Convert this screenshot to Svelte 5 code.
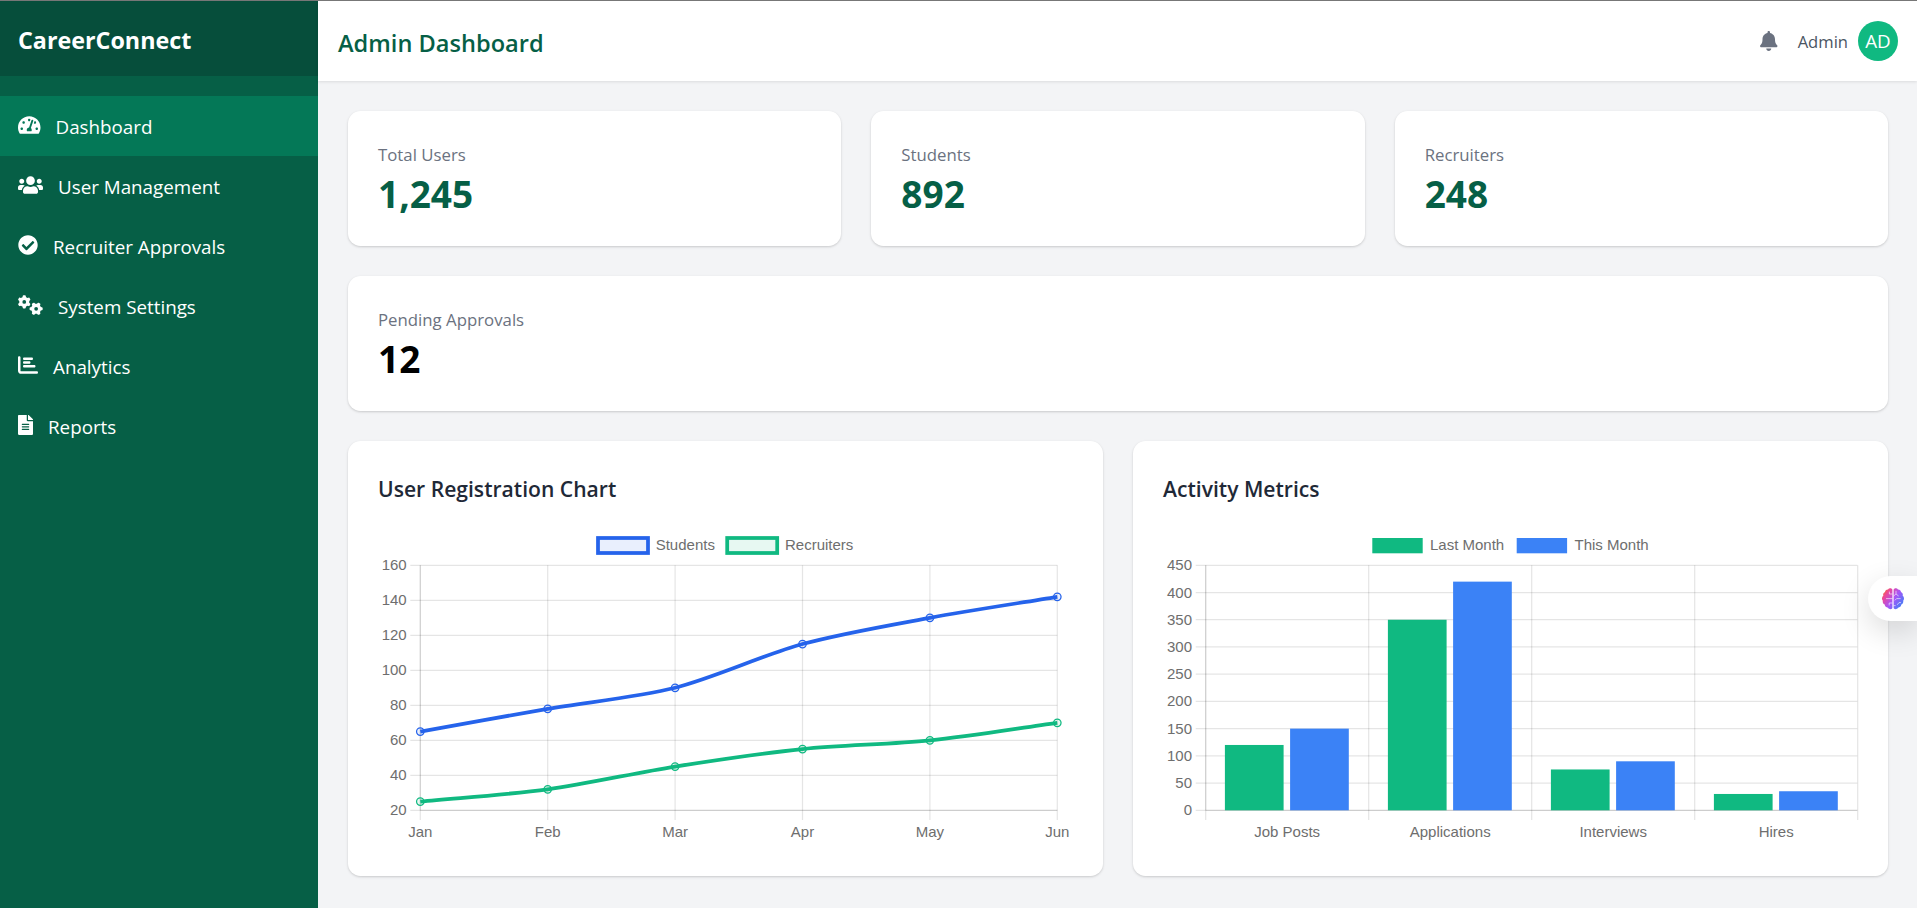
<script>
  const nav = [
    { label: 'Dashboard', vb: '0 0 576 512', w: 22.5, active: true, d: 'M288 32C128.94 32 0 160.94 0 320c0 52.8 14.25 102.26 39.06 144.8 5.61 9.62 16.3 15.2 27.44 15.2h443c11.14 0 21.83-5.58 27.44-15.2C561.75 422.26 576 372.8 576 320c0-159.06-128.94-288-288-288zm0 64c14.71 0 26.58 10.13 30.32 23.65-1.11 2.26-2.64 4.23-3.45 6.67l-9.22 27.67c-5.13 3.49-10.97 6.01-17.64 6.01-17.67 0-32-14.33-32-32S270.33 96 288 96zM96 384c-17.67 0-32-14.33-32-32s14.33-32 32-32 32 14.33 32 32-14.33 32-32 32zm48-160c-17.67 0-32-14.33-32-32s14.33-32 32-32 32 14.33 32 32-14.33 32-32 32zm246.77-72.41l-61.33 184C343.13 347.33 352 364.54 352 384c0 11.72-3.38 22.55-8.88 32H232.88c-5.5-9.45-8.88-20.28-8.88-32 0-33.94 26.5-61.43 59.9-63.59l61.34-184.01c4.17-12.56 17.73-19.45 30.36-15.17 12.57 4.19 19.35 17.79 15.17 30.36zm14.66 57.2l15.52-46.55c3.47-1.29 7.13-2.23 11.05-2.23 17.67 0 32 14.33 32 32s-14.33 32-32 32c-11.38-.01-20.89-6.28-26.57-15.22zM480 384c-17.67 0-32-14.33-32-32s14.33-32 32-32 32 14.33 32 32-14.33 32-32 32z' },
    { label: 'User Management', vb: '0 0 640 512', w: 25, d: 'M96 224c35.3 0 64-28.7 64-64s-28.7-64-64-64-64 28.7-64 64 28.7 64 64 64zm448 0c35.3 0 64-28.7 64-64s-28.7-64-64-64-64 28.7-64 64 28.7 64 64 64zm32 32h-64c-17.6 0-33.5 7.1-45.1 18.6 40.3 22.1 68.9 62 75.1 109.4h66c17.7 0 32-14.3 32-32v-32c0-35.3-28.7-64-64-64zm-256 0c61.9 0 112-50.1 112-112S381.9 32 320 32 208 82.1 208 144s50.1 112 112 112zm76.8 32h-8.3c-20.8 10-43.9 16-68.5 16s-47.6-6-68.5-16h-8.3C179.6 288 128 339.6 128 403.2V432c0 26.5 21.5 48 48 48h288c26.5 0 48-21.5 48-48v-28.8c0-63.6-51.6-115.2-115.2-115.2zm-223.7-13.4C161.5 263.1 145.6 256 128 256H64c-35.3 0-64 28.7-64 64v32c0 17.7 14.3 32 32 32h65.9c6.3-47.4 34.9-87.3 75.2-109.4z' },
    { label: 'Recruiter Approvals', vb: '0 0 512 512', w: 20, d: 'M504 256c0 136.967-111.033 248-248 248S8 392.967 8 256 119.033 8 256 8s248 111.033 248 248zM227.314 387.314l184-184c6.248-6.248 6.248-16.379 0-22.627l-22.627-22.627c-6.248-6.249-16.379-6.249-22.628 0L216 308.118l-70.059-70.059c-6.248-6.248-16.379-6.248-22.628 0l-22.627 22.627c-6.248 6.248-6.248 16.379 0 22.627l104 104c6.249 6.249 16.379 6.249 22.628.001z' },
    { label: 'System Settings', vb: '0 0 640 512', w: 25, d: 'M308.5 135.3c7.1-6.3 9.9-16.2 6.2-25c-2.3-5.3-4.8-10.5-7.6-15.5L304 89.4c-3-5-6.3-9.9-9.8-14.6c-5.7-7.6-15.7-10.1-24.7-7.1l-28.2 9.3c-10.7-8.8-23-16-36.2-20.9L199 27.1c-1.9-9.3-9.1-16.7-18.5-17.8C173.9 8.4 167.2 8 160.4 8h-.7c-6.8 0-13.5 .4-20.1 1.2c-9.4 1.1-16.6 8.6-18.5 17.8L115 56.1c-13.3 5-25.5 12.1-36.2 20.9L50.5 67.8c-9-3-19-.5-24.7 7.1c-3.5 4.7-6.8 9.6-9.9 14.6l-3 5.3c-2.8 5-5.3 10.2-7.6 15.6c-3.7 8.7-.9 18.6 6.2 25l22.2 19.8C32.6 161.9 32 168.9 32 176s.6 14.1 1.7 20.9L11.5 216.7c-7.1 6.3-9.9 16.2-6.2 25c2.3 5.3 4.8 10.5 7.6 15.6l3 5.2c3 5.1 6.3 9.9 9.9 14.6c5.7 7.6 15.7 10.1 24.7 7.1l28.2-9.3c10.7 8.8 23 16 36.2 20.9l6.1 29.1c1.9 9.3 9.1 16.7 18.5 17.8c6.7 .8 13.5 1.2 20.4 1.2s13.7-.4 20.4-1.2c9.4-1.1 16.6-8.6 18.5-17.8l6.1-29.1c13.3-5 25.5-12.1 36.2-20.9l28.2 9.3c9 3 19 .5 24.7-7.1c3.5-4.7 6.8-9.5 9.8-14.6l3.1-5.4c2.8-5 5.3-10.2 7.6-15.5c3.7-8.7 .9-18.6-6.2-25l-22.2-19.8c1.1-6.8 1.7-13.8 1.7-20.9s-.6-14.1-1.7-20.9l22.2-19.8zM208 176a48 48 0 1 1 -96 0 48 48 0 1 1 96 0zM504.7 500.5c6.3 7.1 16.2 9.9 25 6.2c5.3-2.3 10.5-4.8 15.5-7.6l5.4-3.1c5-3 9.9-6.3 14.6-9.8c7.6-5.7 10.1-15.7 7.1-24.7l-9.3-28.2c8.8-10.7 16-23 20.9-36.2l29.1-6.1c9.3-1.9 16.7-9.1 17.8-18.5c.8-6.7 1.2-13.5 1.2-20.4s-.4-13.7-1.2-20.4c-1.1-9.4-8.6-16.6-17.8-18.5L583.9 307c-5-13.3-12.1-25.5-20.9-36.2l9.3-28.2c3-9 .5-19-7.1-24.7c-4.7-3.5-9.6-6.8-14.6-9.9l-5.3-3c-5-2.8-10.2-5.3-15.6-7.6c-8.7-3.7-18.6-.9-25 6.2l-19.8 22.2c-6.8-1.1-13.8-1.7-20.9-1.7s-14.1 .6-20.9 1.7l-19.8-22.2c-6.3-7.1-16.2-9.9-25-6.2c-5.3 2.3-10.5 4.8-15.6 7.6l-5.2 3c-5.1 3-9.9 6.3-14.6 9.9c-7.6 5.7-10.1 15.7-7.1 24.7l9.3 28.2c-8.8 10.7-16 23-20.9 36.2L315.1 313c-9.3 1.9-16.7 9.1-17.8 18.5c-.8 6.7-1.2 13.5-1.2 20.4s.4 13.7 1.2 20.4c1.1 9.4 8.6 16.6 17.8 18.5l29.1 6.1c5 13.3 12.1 25.5 20.9 36.2l-9.3 28.2c-3 9-.5 19 7.1 24.7c4.7 3.5 9.5 6.8 14.6 9.8l5.4 3.1c5 2.8 10.2 5.3 15.5 7.6c8.7 3.7 18.6 .9 25-6.2l19.8-22.2c6.8 1.1 13.8 1.7 20.9 1.7s14.1-.6 20.9-1.7l19.8 22.2zM464 304a48 48 0 1 1 0 96 48 48 0 1 1 0-96z' },
    { label: 'Analytics', vb: '0 0 512 512', w: 20, d: 'M32 32c17.7 0 32 14.3 32 32V400c0 8.8 7.2 16 16 16H480c17.7 0 32 14.3 32 32s-14.3 32-32 32H80c-44.2 0-80-35.8-80-80V64C0 46.3 14.3 32 32 32zm96 64c0-17.7 14.3-32 32-32l192 0c17.7 0 32 14.3 32 32s-14.3 32-32 32l-192 0c-17.7 0-32-14.3-32-32zm32 64l128 0c17.7 0 32 14.3 32 32s-14.3 32-32 32l-128 0c-17.7 0-32-14.3-32-32s14.3-32 32-32zm0 96H416c17.7 0 32 14.3 32 32s-14.3 32-32 32H160c-17.7 0-32-14.3-32-32s14.3-32 32-32z' },
    { label: 'Reports', vb: '0 0 384 512', w: 15, d: 'M224 136V0H24C10.7 0 0 10.7 0 24v464c0 13.3 10.7 24 24 24h336c13.3 0 24-10.7 24-24V160H248c-13.2 0-24-10.8-24-24zm64 236c0 6.6-5.4 12-12 12H108c-6.6 0-12-5.4-12-12v-8c0-6.6 5.4-12 12-12h168c6.6 0 12 5.4 12 12v8zm0-64c0 6.6-5.4 12-12 12H108c-6.6 0-12-5.4-12-12v-8c0-6.6 5.4-12 12-12h168c6.6 0 12 5.4 12 12v8zm0-72v8c0 6.6-5.4 12-12 12H108c-6.6 0-12-5.4-12-12v-8c0-6.6 5.4-12 12-12h168c6.6 0 12 5.4 12 12zm96-114.1v6.1H256V0h6.1c6.4 0 12.5 2.5 17 7l97.9 98c4.5 4.5 7 10.6 7 16.9z' }
  ];

  const stats = [
    { label: 'Total Users', value: '1,245' },
    { label: 'Students', value: '892' },
    { label: 'Recruiters', value: '248' }
  ];

  const top = 565.3, bottom = 810.3;

  // line chart
  const lx0 = 420.3, lStep = 127.4;
  const months = ['Jan', 'Feb', 'Mar', 'Apr', 'May', 'Jun'];
  const lTicks = [160, 140, 120, 100, 80, 60, 40, 20];
  const ly = (v) => bottom - ((v - 20) * (bottom - top)) / 140;
  const lineSeries = [
    { label: 'Students', color: '#2563eb', fill: 'rgba(37,99,235,0.1)', data: [65, 78, 90, 115, 130, 142] },
    { label: 'Recruiters', color: '#10b981', fill: 'rgba(16,185,129,0.1)', data: [25, 32, 45, 55, 60, 70] }
  ].map((s) => {
    const pts = s.data.map((v, i) => [lx0 + i * lStep, ly(v)]);
    return { ...s, pts, path: spline(pts, 0.3) };
  });

  function spline(pts, t) {
    const cps = pts.map((p, i) => {
      const a = pts[i - 1] || p;
      const b = pts[i + 1] || p;
      const d1 = Math.hypot(p[0] - a[0], p[1] - a[1]);
      const d2 = Math.hypot(b[0] - p[0], b[1] - p[1]);
      const s1 = d1 / (d1 + d2);
      const s2 = d2 / (d1 + d2);
      return {
        prev: [p[0] - t * s1 * (b[0] - a[0]), p[1] - t * s1 * (b[1] - a[1])],
        next: [p[0] + t * s2 * (b[0] - a[0]), p[1] + t * s2 * (b[1] - a[1])]
      };
    });
    let d = `M${pts[0][0]} ${pts[0][1]}`;
    for (let i = 1; i < pts.length; i++) {
      const c1 = cps[i - 1].next, c2 = cps[i].prev;
      d += `C${c1[0]} ${c1[1]} ${c2[0]} ${c2[1]} ${pts[i][0]} ${pts[i][1]}`;
    }
    return d;
  }

  // bar chart
  const bx0 = 1205.7, bStep = 163;
  const bTicks = [450, 400, 350, 300, 250, 200, 150, 100, 50, 0];
  const by = (v) => bottom - (v * (bottom - top)) / 450;
  const cats = ['Job Posts', 'Applications', 'Interviews', 'Hires'];
  const barSeries = [
    { color: '#10b981', off: 19.2, data: [120, 350, 75, 30] },
    { color: '#3b82f6', off: 84.4, data: [150, 420, 90, 35] }
  ];
</script>

<div class="app">
  <aside class="sidebar">
    <div class="brand">CareerConnect</div>
    <nav class="nav">
      {#each nav as item}
        <div class="nav-item" class:active={item.active}>
          <svg class="nav-icon" viewBox={item.vb} width={item.w} height="20"><path d={item.d} fill="currentColor" /></svg>
          <span class="nav-text">{item.label}</span>
        </div>
      {/each}
    </nav>
  </aside>

  <div class="main">
    <header class="topbar">
      <h1>Admin Dashboard</h1>
      <div class="user">
        <svg class="bell" viewBox="0 0 448 512" width="17.5" height="20"><path fill="currentColor" d="M224 512c35.32 0 63.97-28.65 63.97-64H160.03c0 35.35 28.65 64 63.97 64zm215.39-149.71c-19.32-20.76-55.47-51.99-55.47-154.29 0-77.7-54.48-139.9-127.94-155.16V32c0-17.67-14.32-32-31.98-32s-31.98 14.33-31.98 32v20.84C118.56 68.1 64.08 130.3 64.08 208c0 102.3-36.15 133.53-55.47 154.29-6 6.45-8.66 14.16-8.61 21.71.11 16.4 12.98 32 32.1 32h383.8c19.12 0 32-15.6 32.1-32 .05-7.55-2.61-15.27-8.61-21.71z" /></svg>
        <span class="uname">Admin</span>
        <div class="avatar">AD</div>
      </div>
    </header>

    <main class="content">
      <section class="stats">
        {#each stats as s}
          <div class="card stat">
            <div class="stat-label">{s.label}</div>
            <div class="stat-value">{s.value}</div>
          </div>
        {/each}
        <div class="card stat wide">
          <div class="stat-label">Pending Approvals</div>
          <div class="stat-value black">12</div>
        </div>
      </section>

      <section class="charts">
        <div class="card chart">
          <h2>User Registration Chart</h2>
          <svg class="plot" viewBox="378 530 695 316" width="695" height="316">
            <rect x="598" y="538" width="50" height="15" fill="rgba(37,99,235,0.1)" stroke="#2563eb" stroke-width="3.75" />
            <text x="655.7" y="550" class="lbl">Students</text>
            <rect x="727.2" y="538" width="50" height="15" fill="rgba(16,185,129,0.1)" stroke="#10b981" stroke-width="3.75" />
            <text x="785" y="550" class="lbl">Recruiters</text>

            {#each lTicks as t}
              <line x1="410.3" x2="1057.3" y1={ly(t)} y2={ly(t)} class="grid" />
              <text x="406.7" y={ly(t) + 5} class="lbl end">{t}</text>
            {/each}
            {#each months as m, i}
              <line x1={lx0 + i * lStep} x2={lx0 + i * lStep} y1={top} y2="820" class="grid" />
              <text x={lx0 + i * lStep} y="836.8" class="lbl mid">{m}</text>
            {/each}
            <line x1={lx0} x2={lx0} y1={top} y2={bottom} class="grid" />
            <line x1={lx0} x2="1057.3" y1={bottom} y2={bottom} class="grid" />

            {#each lineSeries as s}
              <path d={s.path} fill="none" stroke={s.color} stroke-width="3.75" />
              {#each s.pts as p}
                <circle cx={p[0]} cy={p[1]} r="3.75" fill={s.fill} stroke={s.color} stroke-width="1.25" />
              {/each}
            {/each}
          </svg>
        </div>

        <div class="card chart">
          <h2>Activity Metrics</h2>
          <svg class="plot" viewBox="1163 530 695 316" width="695" height="316">
            <rect x="1372.3" y="538" width="50.4" height="15.3" fill="#10b981" />
            <text x="1430" y="550" class="lbl">Last Month</text>
            <rect x="1516.7" y="538" width="50.4" height="15.3" fill="#3b82f6" />
            <text x="1574.5" y="550" class="lbl">This Month</text>

            {#each bTicks as t}
              <line x1="1195.7" x2="1857.3" y1={by(t)} y2={by(t)} class="grid" />
              <text x="1192" y={by(t) + 5} class="lbl end">{t}</text>
            {/each}
            {#each [0, 1, 2, 3, 4] as i}
              <line x1={bx0 + i * bStep} x2={bx0 + i * bStep} y1={top} y2="820" class="grid" />
            {/each}
            <line x1={bx0} x2={bx0} y1={top} y2={bottom} class="grid" />
            <line x1={bx0} x2="1857.3" y1={bottom} y2={bottom} class="grid" />
            {#each cats as c, i}
              <text x={bx0 + (i + 0.5) * bStep} y="836.8" class="lbl mid">{c}</text>
            {/each}

            {#each barSeries as s}
              {#each s.data as v, i}
                <rect x={bx0 + i * bStep + s.off} y={by(v)} width="58.7" height={bottom - by(v)} fill={s.color} />
              {/each}
            {/each}
          </svg>
        </div>
      </section>
    </main>
  </div>

  <div class="brain-pill">
    <svg viewBox="0 0 24 24" width="24" height="24">
      <defs>
        <linearGradient id="brainGrad" x1="0" y1="0.1" x2="1" y2="0.8">
          <stop offset="0" stop-color="#f97316" />
          <stop offset="0.22" stop-color="#ec4899" />
          <stop offset="0.55" stop-color="#a855f7" />
          <stop offset="1" stop-color="#3b82f6" />
        </linearGradient>
      </defs>
      <path fill="url(#brainGrad)" d="M11.4 2.6C10.4 1 8 1 7 2.4 5.4 2.3 4 3.5 4 5.1 2.5 5.8 1.8 7.3 2.3 8.8 .8 10 .5 12.4 1.8 13.8 1.4 15.4 2.2 17 3.7 17.6 3.8 19.4 5.2 20.7 7 20.7 8 22.5 10.6 22.7 11.4 21zM12.6 2.6C13.6 1 16 1 17 2.4 18.6 2.3 20 3.5 20 5.1 21.5 5.8 22.2 7.3 21.7 8.8 23.2 10 23.5 12.4 22.2 13.8 22.6 15.4 21.8 17 20.3 17.6 20.2 19.4 18.8 20.7 17 20.7 16 22.5 13.4 22.7 12.6 21z" />
      <path fill="none" stroke="#fff" stroke-width="0.7" opacity="0.85" d="M11.4 7H8.4V4.6M11.4 11.6H5M11.4 16H8.2V18.4M15 3.8V7L12.6 9M15 7L17.6 9M19.6 11.6H15.6L13.8 13.4M16.2 17.8L18 15.6H20M14.6 18.6H12.6" />
    </svg>
  </div>
</div>

<style>
  :global(body) {
    margin: 0;
    background: #f3f4f6;
  }

  .app {
    display: flex;
    height: 907px;
    border-top: 1px solid #777;
    overflow: hidden;
    font-family: "Open Sans", "Noto Sans", sans-serif;
    position: relative;
  }

  .sidebar {
    width: 318px;
    flex-shrink: 0;
    background: #065f46;
    color: #fff;
  }

  .brand {
    height: 75px;
    padding: 3px 0 0 18px;
    display: flex;
    align-items: center;
    background: #064e3b;
    font-size: 23.3px;
    font-weight: 700;
    box-sizing: border-box;
  }

  .nav {
    padding-top: 20px;
  }

  .nav-item {
    height: 60px;
    padding: 0 18px;
    display: flex;
    align-items: center;
    gap: 15px;
    font-size: 18.8px;
  }

  .nav-text {
    padding-top: 2px;
  }

  .nav-item.active {
    background: #047857;
  }

  .nav-icon {
    flex-shrink: 0;
    position: relative;
    top: -1px;
  }

  .main {
    flex: 1;
    min-width: 0;
    display: flex;
    flex-direction: column;
  }

  .topbar {
    height: 80px;
    flex-shrink: 0;
    padding: 0 19px 0 20px;
    display: flex;
    align-items: center;
    justify-content: space-between;
    background: #fff;
    box-sizing: border-box;
    box-shadow: 0 1px 3px rgba(0, 0, 0, 0.1);
    position: relative;
  }

  h1 {
    margin: 0;
    padding-top: 3px;
    font-size: 23.6px;
    font-weight: 600;
    color: #065f46;
  }

  .user {
    display: flex;
    align-items: center;
  }

  .bell {
    color: #6b7280;
    margin-right: 20px;
  }

  .uname {
    font-size: 16.6px;
    color: #4b5563;
    margin-right: 10px;
  }

  .avatar {
    width: 40px;
    height: 40px;
    border-radius: 50%;
    background: #10b981;
    color: #fff;
    font-size: 18.8px;
    display: flex;
    align-items: center;
    justify-content: center;
  }

  .content {
    padding: 30px 29px 30px 30px;
    display: flex;
    flex-direction: column;
    gap: 30px;
  }

  .stats {
    display: grid;
    grid-template-columns: repeat(3, 1fr);
    gap: 30px;
  }

  .card {
    background: #fff;
    border-radius: 12.5px;
    box-shadow: 0 1px 3px rgba(0, 0, 0, 0.12), 0 1px 2px rgba(0, 0, 0, 0.06);
  }

  .stat {
    height: 135px;
    padding: 30px;
    box-sizing: border-box;
  }

  .wide {
    grid-column: 1 / -1;
  }

  .stat-label {
    font-size: 16.8px;
    line-height: 27px;
    color: #6b7280;
  }

  .stat-value {
    margin-top: 4px;
    font-size: 37px;
    line-height: 44px;
    font-weight: 700;
    color: #065f46;
  }

  .stat-value.black {
    color: #000;
  }

  .charts {
    display: grid;
    grid-template-columns: repeat(2, 1fr);
    gap: 30px;
  }

  .chart {
    height: 435px;
    padding: 30px;
    box-sizing: border-box;
  }

  h2 {
    margin: 0 0 25px;
    height: 34px;
    font-size: 21.1px;
    line-height: 36px;
    font-weight: 600;
    color: #1f2937;
  }

  .plot {
    display: block;
    overflow: visible;
  }

  .grid {
    stroke: rgba(0, 0, 0, 0.1);
    stroke-width: 1.25;
  }

  .lbl {
    font-family: "Liberation Sans", Arial, sans-serif;
    font-size: 15px;
    fill: #6e6e6e;
  }

  .end {
    text-anchor: end;
  }

  .mid {
    text-anchor: middle;
  }

  .brain-pill {
    position: absolute;
    right: 0;
    top: 575px;
    width: 49px;
    height: 45px;
    box-sizing: border-box;
    padding-left: 13px;
    display: flex;
    align-items: center;
    background: #fff;
    border-radius: 22.5px 0 0 22.5px;
    box-shadow: 0 10px 30px rgba(0, 0, 0, 0.14);
  }
</style>
